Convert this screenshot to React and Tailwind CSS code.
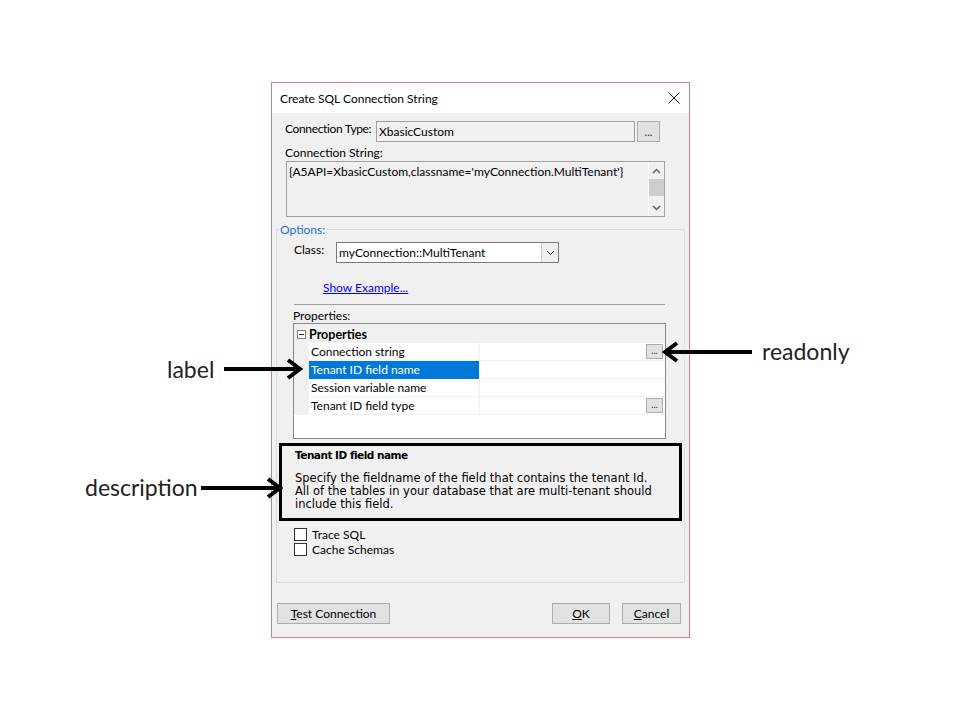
import React from 'react';

// Rijen van het property grid
const PROPS = [
  { label: 'Connection string', more: true },
  { label: 'Tenant ID field name', selected: true },
  { label: 'Session variable name' },
  { label: 'Tenant ID field type', more: true },
];

function DotsButton({ small }) {
  return (
    <div
      className={
        small
          ? 'w-[17px] h-[15px] border border-[#adadad] bg-[#e1e1e1] flex items-end justify-center pb-[3px] text-[9px] leading-[9px] text-[#1a1a60]'
          : 'w-[23px] h-[21px] border border-[#adadad] bg-[#e1e1e1] flex items-end justify-center pb-[5px] text-[11px] leading-[9px] text-[#1a1a60]'
      }
    >
      ...
    </div>
  );
}

function Arrow({ x1, x2, y }) {
  // pijl naar links of rechts, dikke zwarte lijn met open punt
  const dir = x2 > x1 ? 1 : -1;
  const left = Math.min(x1, x2) - 4;
  const w = Math.abs(x2 - x1) + 8;
  const tip = x2 - left;
  const start = x1 - left;
  return (
    <svg
      className="absolute"
      style={{ left, top: y - 12, width: w, height: 24 }}
      viewBox={`0 0 ${w} 24`}
    >
      <line x1={start} y1="12" x2={tip - dir * 3} y2="12" stroke="black" strokeWidth="4" />
      <polyline
        points={`${tip - dir * 12},3 ${tip},12 ${tip - dir * 12},21`}
        fill="none"
        stroke="black"
        strokeWidth="4"
        strokeLinejoin="miter"
      />
    </svg>
  );
}

export default function App() {
  return (
    <div className="relative w-[960px] h-[720px] bg-white overflow-hidden pt-[82px] font-['Lato',sans-serif] text-[12px] text-black">
      {/* dialoog */}
      <div className="ml-[271px] w-[419px] h-[556px] border border-[#cf7f7f] bg-[#f0f0f0] flex flex-col">
        <div className="h-[30px] bg-white flex items-center justify-between pl-[8px] pr-[9px]">
          <span className="leading-[15px]">Create SQL Connection String</span>
          <svg width="12" height="12" viewBox="0 0 12 12">
            <path d="M0.5 0.5 L11.5 11.5 M11.5 0.5 L0.5 11.5" stroke="#111" strokeWidth="1" />
          </svg>
        </div>

        {/* connection type */}
        <div className="flex mt-[8px] pl-[13px]">
          <div className="w-[91px] h-[21px] leading-[15px] whitespace-nowrap tracking-[-0.35px]">Connection Type:</div>
          <div className="w-[259px] h-[21px] border border-[#a0a0a0] px-[2px] leading-[19px]">XbasicCustom</div>
          <div className="ml-[2px]">
            <DotsButton />
          </div>
        </div>

        <div className="mt-[3px] pl-[13px] leading-[15px] whitespace-nowrap">Connection String:</div>
        <div className="mt-[1px] ml-[14px] w-[379px] h-[56px] border border-[#a0a0a0] flex">
          <div className="flex-1 px-[2px] pt-[2px] leading-[15px]">
            {"{A5API=XbasicCustom,classname='myConnection.MultiTenant'}"}
          </div>
          <div className="w-[16px] border-l border-white flex flex-col items-center">
            <svg className="mt-[6px]" width="9" height="6" viewBox="0 0 9 6">
              <path d="M1 5 L4.5 1.5 L8 5" fill="none" stroke="#606060" strokeWidth="1.5" />
            </svg>
            <div className="mt-[5px] w-[15px] h-[17px] bg-[#cdcdcd]"></div>
            <svg className="mt-[9px]" width="9" height="6" viewBox="0 0 9 6">
              <path d="M1 1 L4.5 4.5 L8 1" fill="none" stroke="#606060" strokeWidth="1.5" />
            </svg>
          </div>
        </div>

        {/* options groep */}
        <div className="relative mt-[12px] ml-[4px] w-[409px] h-[354px] border border-[#dcdcdc] flex flex-col">
          <span className="absolute -top-[8px] left-[2px] px-[1px] bg-[#f0f0f0] leading-[15px] text-[#1f6fd6]">Options:</span>

          <div className="flex mt-[12px] pl-[17px]">
            <div className="w-[42px] h-[21px] leading-[15px]">Class:</div>
            <div className="w-[223px] h-[21px] border border-[#7a7a7a] bg-white flex">
              <div className="flex-1 pl-[2px] leading-[19px]">myConnection::MultiTenant</div>
              <div className="w-[17px] border-l border-[#c8c8c8] bg-[#f0f0f0] flex items-center justify-center">
                <svg width="9" height="6" viewBox="0 0 9 6">
                  <path d="M1 1 L4.5 4.5 L8 1" fill="none" stroke="#404040" strokeWidth="1" />
                </svg>
              </div>
            </div>
          </div>

          <div className="mt-[17px] ml-[46px] leading-[15px] text-[#0000ff] underline">Show Example...</div>
          <div className="mt-[9px] ml-[17px] w-[371px] h-[1px] bg-[#a0a0a0]"></div>
          <div className="mt-[4px] ml-[16px] leading-[14px]">Properties:</div>

          {/* property grid */}
          <div className="ml-[16px] w-[373px] h-[116px] border border-[#828790] bg-white flex flex-col">
            <div className="h-[19px] bg-[#f0f0f0] flex items-center pt-[2px]">
              <div className="ml-[3px] w-[9px] h-[9px] border border-[#808080] bg-white flex items-center justify-center">
                <div className="w-[5px] h-[1px] bg-[#202020]"></div>
              </div>
              <span className="ml-[3px] font-bold text-[12.5px] leading-[15px]">Properties</span>
            </div>
            {PROPS.map((p) => (
              <div key={p.label} className="h-[18px] flex">
                <div className="w-[15px] bg-[#f0f0f0]"></div>
                <div
                  className={
                    p.selected
                      ? 'w-[170px] bg-[#0078d7] text-white pl-[2px] leading-[18px]'
                      : 'w-[170px] border-b border-[#f0f0f0] pl-[2px] leading-[18px]'
                  }
                >
                  {p.label}
                </div>
                <div className="flex-1 border-l border-b border-[#f0f0f0] flex items-center justify-end pr-[2px]">
                  {p.more && <DotsButton small />}
                </div>
              </div>
            ))}
          </div>

          {/* beschrijving */}
          <div className="mt-[4px] ml-[2px] w-[403px] h-[78px] border-[3px] border-black font-['DejaVu_Sans',sans-serif] text-[11.5px] pl-[13px]">
            <div className="mt-[3px] font-bold text-[10.5px] leading-[13px] tracking-[-0.5px]">Tenant ID field name</div>
            <div className="mt-[10px] leading-[13px] whitespace-nowrap">
              Specify the fieldname of the field that contains the tenant Id.
              <br />
              All of the tables in your database that are multi-tenant should
              <br />
              include this field.
            </div>
          </div>

          <div className="mt-[7px] ml-[17px] flex flex-col">
            {['Trace SQL', 'Cache Schemas'].map((t) => (
              <div key={t} className="h-[15px] flex items-start">
                <div className="w-[13px] h-[13px] border border-[#333] bg-white"></div>
                <span className="ml-[5px] leading-[13px]">{t}</span>
              </div>
            ))}
          </div>
        </div>

        {/* knoppen */}
        <div className="mt-[20px] flex pl-[5px] pr-[8px]">
          <div className="w-[113px] h-[21px] border border-[#adadad] bg-[#e1e1e1] flex items-center justify-center leading-[15px]">
            <span><span className="underline">T</span>est Connection</span>
          </div>
          <div className="ml-auto w-[58px] h-[21px] border border-[#adadad] bg-[#e1e1e1] flex items-center justify-center leading-[15px]">
            <span><span className="underline">O</span>K</span>
          </div>
          <div className="ml-[12px] w-[59px] h-[21px] border border-[#adadad] bg-[#e1e1e1] flex items-center justify-center leading-[15px]">
            <span><span className="underline">C</span>ancel</span>
          </div>
        </div>
      </div>

      {/* annotaties */}
      <span className="absolute left-[167px] top-[355px] leading-[28px] text-[23px] text-[#222]">label</span>
      <Arrow x1={224} x2={300} y={369} />
      <span className="absolute left-[85px] top-[473px] leading-[28px] text-[23px] text-[#222]">description</span>
      <Arrow x1={201} x2={280} y={488} />
      <span className="absolute left-[762px] top-[337px] leading-[28px] text-[23px] text-[#222]">readonly</span>
      <Arrow x1={752} x2={665} y={352} />
    </div>
  );
}
